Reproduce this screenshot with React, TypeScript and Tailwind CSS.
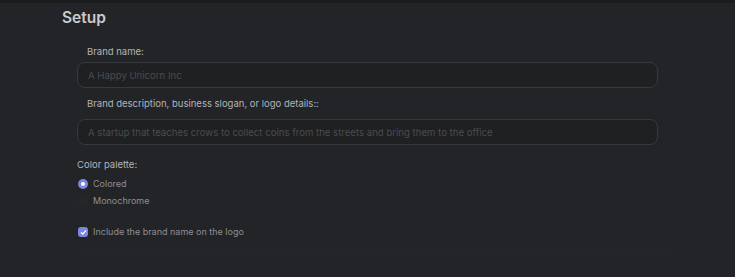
import { useState } from 'react'

export default function App() {
  const [palette, setPalette] = useState('colored')
  const [includeName, setIncludeName] = useState(true)

  return (
    <div
      className="w-[735px] h-[277px] bg-[#232427] border-t-[3px] border-[#1b1c1e] overflow-hidden"
      style={{ fontFamily: 'Inter, "Noto Sans", sans-serif' }}
    >
      <div className="pl-[62px] pt-[5px]">
        <h1 className="text-[15.5px] leading-[20px] font-semibold text-[#cbcbcc]">Setup</h1>
        <div className="ml-[15px] w-[581px] mt-[17px]">
          <label className="block pl-[10px] text-[9.5px] leading-[14px] text-[#b4b4b6]">Brand name:</label>
          <input
            className="mt-[3px] block w-full h-[26px] rounded-[8px] border border-[#38393c] bg-[#1f2022] px-[10px] text-[9.6px] text-[#cfcfcf] placeholder:text-[#4b4c4f] outline-none"
            placeholder="A Happy Unicorn Inc"
          />
          <label className="block mt-[9px] pl-[10px] text-[9.5px] leading-[14px] text-[#b4b4b6]">
            Brand description, business slogan, or logo details::
          </label>
          <input
            className="mt-[8px] block w-full h-[26px] rounded-[8px] border border-[#38393c] bg-[#1f2022] px-[10px] text-[9.6px] text-[#cfcfcf] placeholder:text-[#4b4c4f] outline-none"
            placeholder="A startup that teaches crows to collect coins from the streets and bring them to the office"
          />
          <div className="mt-[13px] text-[9.5px] leading-[14px] text-[#b4b4b6]">Color palette:</div>
          <div className="mt-[5px] flex flex-col gap-[3px]">
            {[
              ['colored', 'Colored'],
              ['mono', 'Monochrome'],
            ].map(([value, text]) => (
              <label key={value} className="flex items-center gap-[5px] h-[14px] cursor-pointer" onClick={() => setPalette(value)}>
                <span
                  className={
                    palette === value
                      ? 'ml-[1px] w-[10px] h-[10px] rounded-full bg-[#7c86e0] flex items-center justify-center'
                      : 'ml-[1px] w-[10px] h-[10px] rounded-full bg-[#262729]'
                  }
                >
                  {palette === value && <span className="w-[4px] h-[4px] rounded-full bg-white" />}
                </span>
                <span className="text-[9px] text-[#8e8f92]">{text}</span>
              </label>
            ))}
          </div>
          <label className="mt-[17px] flex items-center gap-[5px] h-[14px] cursor-pointer" onClick={() => setIncludeName(!includeName)}>
            <span
              className={
                includeName
                  ? 'ml-[1px] w-[10px] h-[10px] rounded-[3px] bg-[#7c86e0] flex items-center justify-center'
                  : 'ml-[1px] w-[10px] h-[10px] rounded-[3px] bg-[#262729]'
              }
            >
              {includeName && (
                <svg width="7" height="7" viewBox="0 0 8 8" fill="none">
                  <path d="M1.5 4.2 3.2 5.8 6.5 2" stroke="white" strokeWidth="1.4" strokeLinecap="round" strokeLinejoin="round" />
                </svg>
              )}
            </span>
            <span className="text-[9px] text-[#8e8f92]">Include the brand name on the logo</span>
          </label>
          <div className="mt-[12px] w-[594px] border-t border-[#262729]" />
        </div>
      </div>
    </div>
  )
}
